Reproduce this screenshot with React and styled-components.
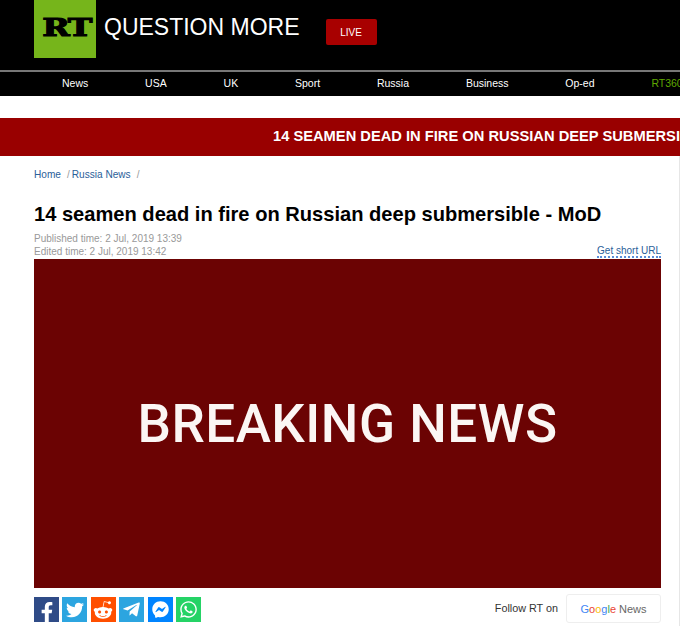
import React from "react";
import styled, { createGlobalStyle } from "styled-components";
import {
  FaFacebookF,
  FaTwitter,
  FaRedditAlien,
  FaTelegramPlane,
  FaFacebookMessenger,
  FaWhatsapp,
} from "react-icons/fa";

const GlobalStyle = createGlobalStyle`
  html, body {
    margin: 0;
    padding: 0;
    background: #fff;
    overflow: hidden;
  }
  body {
    font-family: "Liberation Sans", Arial, sans-serif;
  }
  a {
    text-decoration: none;
  }
`;

const Page = styled.div`
  width: 680px;
  height: 626px;
  overflow: hidden;
`;

const Header = styled.header`
  background: #000;
  height: 96px;
`;

const TopRow = styled.div`
  display: flex;
  align-items: flex-start;
  height: 70px;
  padding-left: 34px;
`;

const Logo = styled.div`
  width: 62px;
  height: 58px;
  background: #76b51b;
  display: flex;
  justify-content: center;
  overflow: hidden;
`;

const LogoText = styled.span`
  font-family: "DejaVu Serif", serif;
  font-weight: 700;
  font-size: 24px;
  line-height: 24px;
  margin: 16px 0 0 4px;
  color: #000;
  letter-spacing: -1px;
  transform: scaleX(1.38);
  -webkit-text-stroke: 1.1px #000;
`;

const Slogan = styled.div`
  color: #fff;
  font-size: 23px;
  line-height: 28px;
  margin: 13px 0 0 8px;
`;

const LiveButton = styled.a`
  display: flex;
  align-items: center;
  justify-content: center;
  width: 51px;
  height: 26px;
  margin: 19px 0 0 26px;
  background: #a80000;
  border-radius: 2px;
  color: #fff;
  font-size: 10px;
`;

const Nav = styled.nav`
  display: flex;
  gap: 56.85px;
  box-sizing: border-box;
  height: 26px;
  align-items: center;
  padding: 0 0 2px 62px;
  border-top: 2px solid #777;
  white-space: nowrap;
  overflow: hidden;
`;

const NavLink = styled.a`
  color: ${(p) => (p.$green ? "#5fa800" : "#fff")};
  font-size: 10.5px;
`;

const Ticker = styled.div`
  box-sizing: border-box;
  margin-top: 22px;
  height: 38px;
  background: #990000;
  display: flex;
  align-items: center;
  padding: 0 0 2px 273px;
  overflow: hidden;
  white-space: nowrap;
  color: #fff;
  font-size: 14.7px;
  font-weight: 700;
`;

const Content = styled.main`
  box-sizing: border-box;
  height: 470px;
  padding: 0 18px 0 34px;
  border-right: 1px solid #e6e6e6;
  overflow: hidden;
`;

const Crumbs = styled.div`
  display: flex;
  padding-top: 12px;
  font-size: 10.1px;
  line-height: 13px;
  color: #999;
`;

const Crumb = styled.a`
  color: #2a6099;
`;

const Slash = styled.span`
  margin: ${(p) => p.$m};
`;

const Title = styled.h1`
  margin: 20px 0 0;
  font-size: 20.1px;
  line-height: 26px;
  font-weight: 700;
  color: #000;
`;

const MetaRow = styled.div`
  display: flex;
  justify-content: space-between;
  align-items: flex-end;
  margin-top: 5px;
  height: 26px;
`;

const Times = styled.div`
  color: #999;
  font-size: 10px;
  line-height: 13px;
`;

const ShortUrl = styled.a`
  color: #2a6099;
  font-size: 10px;
  line-height: 11px;
  border-bottom: 2px dotted #5a8fd8;
`;

const Breaking = styled.div`
  height: 329px;
  margin-top: 1px;
  background: #6b0303;
  display: flex;
  align-items: center;
  justify-content: center;
  color: #fbf6f4;
  font-family: Roboto, sans-serif;
  font-weight: 500;
  font-size: 53px;
  letter-spacing: 0.5px;
`;

const Footer = styled.div`
  display: flex;
  justify-content: space-between;
  align-items: flex-start;
  margin-top: 6px;
`;

const Shares = styled.div`
  display: flex;
  gap: 3.4px;
  margin-top: 3px;
`;

const Share = styled.a`
  width: 25px;
  height: 25px;
  background: ${(p) => p.$bg};
  color: #fff;
  display: flex;
  align-items: ${(p) => (p.$low ? "flex-end" : "center")};
  justify-content: center;
  overflow: hidden;
  font-size: ${(p) => p.$size}px;
`;

const Follow = styled.div`
  display: flex;
  align-items: center;
  gap: 8px;
`;

const FollowLabel = styled.span`
  font-size: 10.8px;
  color: #333;
  margin-bottom: 2px;
`;

const GoogleNews = styled.a`
  width: 93px;
  height: 27px;
  border: 1px solid #eee;
  border-radius: 3px;
  display: flex;
  align-items: center;
  justify-content: center;
  gap: 3px;
  font-size: 11px;
  color: #666;
`;

const Letter = styled.span`
  color: ${(p) => p.$c};
`;

const navItems = ["News", "USA", "UK", "Sport", "Russia", "Business", "Op-ed"];

const shareItems = [
  { Icon: FaFacebookF, bg: "#2f4b87", size: 20, low: true },
  { Icon: FaTwitter, bg: "#2ca5e0", size: 18 },
  { Icon: FaRedditAlien, bg: "#ff4f00", size: 20 },
  { Icon: FaTelegramPlane, bg: "#2ca5e0", size: 19 },
  { Icon: FaFacebookMessenger, bg: "#0084ff", size: 17 },
  { Icon: FaWhatsapp, bg: "#25d366", size: 19 },
];

const googleLetters = [
  ["G", "#4285f4"],
  ["o", "#ea4335"],
  ["o", "#fbbc05"],
  ["g", "#4285f4"],
  ["l", "#34a853"],
  ["e", "#ea4335"],
];

const App = () => {
  return (
    <Page>
      <GlobalStyle />
      <Header>
        <TopRow>
          <Logo>
            <LogoText>RT</LogoText>
          </Logo>
          <Slogan>QUESTION MORE</Slogan>
          <LiveButton href="#live">LIVE</LiveButton>
        </TopRow>
        <Nav>
          {navItems.map((item) => (
            <NavLink href="#" key={item}>
              {item}
            </NavLink>
          ))}
          <NavLink href="#" $green>
            RT360
          </NavLink>
        </Nav>
      </Header>
      <Ticker>14 SEAMEN DEAD IN FIRE ON RUSSIAN DEEP SUBMERSIBLE - MOD</Ticker>
      <Content>
        <Crumbs>
          <Crumb href="#">Home</Crumb>
          <Slash $m="0 2px 0 6px">/</Slash>
          <Crumb href="#">Russia News</Crumb>
          <Slash $m="0 0 0 6px">/</Slash>
        </Crumbs>
        <Title>14 seamen dead in fire on Russian deep submersible - MoD</Title>
        <MetaRow>
          <Times>
            <div>Published time: 2 Jul, 2019 13:39</div>
            <div>Edited time: 2 Jul, 2019 13:42</div>
          </Times>
          <ShortUrl href="#">Get short URL</ShortUrl>
        </MetaRow>
        <Breaking>BREAKING NEWS</Breaking>
        <Footer>
          <Shares>
            {shareItems.map(({ Icon, bg, size, low }, i) => (
              <Share href="#" key={i} $bg={bg} $size={size} $low={low}>
                <Icon />
              </Share>
            ))}
          </Shares>
          <Follow>
            <FollowLabel>Follow RT on</FollowLabel>
            <GoogleNews href="#">
              <span>
                {googleLetters.map(([l, c], i) => (
                  <Letter key={i} $c={c}>
                    {l}
                  </Letter>
                ))}
              </span>
              News
            </GoogleNews>
          </Follow>
        </Footer>
      </Content>
    </Page>
  );
};

export default App;
